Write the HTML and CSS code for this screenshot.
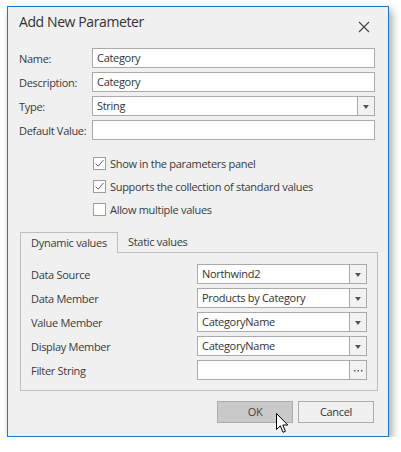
FILE: index.html
```html
<!DOCTYPE html>
<html>
<head>
<meta charset="utf-8">
<link rel="stylesheet" href="styles.css">
</head>
<body>
<div class="window">
  <div class="titlebar">
    <span class="title">Add New Parameter</span>
    <svg class="close" width="12" height="12" viewBox="0 0 12 12"><path d="M1 1 L11 11 M11 1 L1 11" stroke="#444" stroke-width="1.1" fill="none"/></svg>
  </div>
  <div class="form">
    <label>Name:</label>
    <div class="input">Category</div>
    <label>Description:</label>
    <div class="input">Category</div>
    <label>Type:</label>
    <div class="input combo"><span class="val">String</span><span class="btn"><i class="arrow"></i></span></div>
    <label>Default Value:</label>
    <div class="input"></div>
  </div>
  <div class="checks">
    <div class="check"><span class="box"><svg width="11" height="11" viewBox="0 0 11 11"><path d="M1.5 5.5 L4.2 8.2 L9.5 2" stroke="#666" stroke-width="1" fill="none"/></svg></span>Show in the parameters panel</div>
    <div class="check"><span class="box"><svg width="11" height="11" viewBox="0 0 11 11"><path d="M1.5 5.5 L4.2 8.2 L9.5 2" stroke="#666" stroke-width="1" fill="none"/></svg></span>Supports the collection of standard values</div>
    <div class="check"><span class="box"></span>Allow multiple values</div>
  </div>
  <div class="tabs">
    <div class="tabhead">
      <div class="tab active">Dynamic values</div>
      <div class="tab">Static values</div>
      <div class="tabfill"></div>
    </div>
    <div class="panel">
      <label>Data Source</label>
      <div class="input combo"><span class="val">Northwind2</span><span class="btn"><i class="arrow"></i></span></div>
      <label>Data Member</label>
      <div class="input combo"><span class="val">Products by Category</span><span class="btn"><i class="arrow"></i></span></div>
      <label>Value Member</label>
      <div class="input combo"><span class="val">CategoryName</span><span class="btn"><i class="arrow"></i></span></div>
      <label>Display Member</label>
      <div class="input combo"><span class="val">CategoryName</span><span class="btn"><i class="arrow"></i></span></div>
      <label>Filter String</label>
      <div class="input combo"><span class="val"></span><span class="btn"><svg width="9" height="3" viewBox="0 0 9 3"><rect x="0" y="1" width="1.5" height="1.5" fill="#555"/><rect x="3.5" y="1" width="1.5" height="1.5" fill="#555"/><rect x="7" y="1" width="1.5" height="1.5" fill="#555"/></svg></span></div>
    </div>
  </div>
  <div class="buttons">
    <div class="button ok">OK</div>
    <div class="button">Cancel</div>
  </div>
  <svg class="cursor" width="14" height="22" viewBox="0 0 14 22"><path d="M0.5 0.5 L0.5 16.5 L4.3 12.8 L7 19.3 L9.4 18.3 L6.8 12 L11.8 12 Z" fill="#fff" stroke="#000" stroke-width="1" stroke-linejoin="miter"/></svg>
</div>
</body>
</html>
```
FILE: styles.css
```css
* { box-sizing: border-box; }
body {
  margin: 0;
  background: #ffffff;
  font-family: "Open Sans", "Noto Sans", sans-serif;
  font-size: 11px;
  letter-spacing: -0.3px;
  color: #3a3a3a;
}
.window {
  position: relative;
  margin: 6px 0 0 7px;
  width: 382px;
  height: 431px;
  border: 1px solid #1c78c8;
  background: #f0f0f0;
  box-shadow: 3px 4px 8px rgba(0,0,0,0.35);
  display: flex;
  flex-direction: column;
}
.titlebar {
  height: 41px;
  display: flex;
  align-items: flex-start;
  justify-content: space-between;
  padding: 5px 18px 0 11px;
}
.title {
  font-size: 14px;
  color: #333;
  letter-spacing: -0.4px;
}
.close { margin-top: 9px; }
.form {
  display: grid;
  grid-template-columns: 73px 283px;
  grid-auto-rows: 20px;
  row-gap: 4px;
  padding-left: 11px;
  align-items: center;
}
label { white-space: nowrap; }
.input {
  height: 20px;
  border: 1px solid #a9a9a9;
  background: #fff;
  padding: 0 0 0 4px;
  line-height: 17px;
  display: flex;
  align-items: stretch;
  color: #333;
}
.combo { padding-left: 0; }
.combo .val { flex: 1; padding-left: 4px; }
.combo .btn {
  width: 17px;
  border-left: 1px solid #a9a9a9;
  background: #f2f2f2;
  display: flex;
  align-items: center;
  justify-content: center;
}
.arrow {
  width: 0; height: 0;
  border-left: 3.5px solid transparent;
  border-right: 3.5px solid transparent;
  border-top: 4px solid #555;
  margin-top: 1px;
}
.checks {
  display: flex;
  flex-direction: column;
  gap: 10px;
  padding: 17px 0 0 85px;
}
.check {
  display: flex;
  align-items: center;
  height: 13px;
  white-space: nowrap;
}
.box {
  width: 13px; height: 13px;
  border: 1px solid #9d9d9d;
  background: #fff;
  margin-right: 4px;
  display: flex;
  align-items: center;
  justify-content: center;
}
.tabs {
  margin: 16px 0 0 12px;
  width: 358px;
}
.tabhead {
  display: flex;
  height: 21px;
}
.tab {
  padding: 0 10px;
  line-height: 20px;
  white-space: nowrap;
  border-bottom: 1px solid #bdbdbd;
}
.tab.active {
  width: 98px;
  padding: 0;
  text-align: center;
  border: 1px solid #bdbdbd;
  border-bottom: none;
  background: #f0f0f0;
}
.tabfill { flex: 1; border-bottom: 1px solid #bdbdbd; }
.panel {
  height: 138px;
  border: 1px solid #bdbdbd;
  border-top: none;
  display: grid;
  grid-template-columns: 166px 170px;
  grid-auto-rows: 20px;
  row-gap: 4px;
  padding: 11px 0 0 10px;
  align-items: center;
}
.buttons {
  display: flex;
  justify-content: flex-end;
  gap: 5px;
  padding: 10px 14px 0 0;
}
.button {
  width: 76px;
  height: 22px;
  border: 1px solid #adadad;
  background: #f0f0f0;
  text-align: center;
  line-height: 20px;
  color: #333;
}
.button.ok {
  background: #c9c9c9;
  color: #444;
}
.cursor {
  position: absolute;
  left: 268px;
  top: 406px;
}
```
